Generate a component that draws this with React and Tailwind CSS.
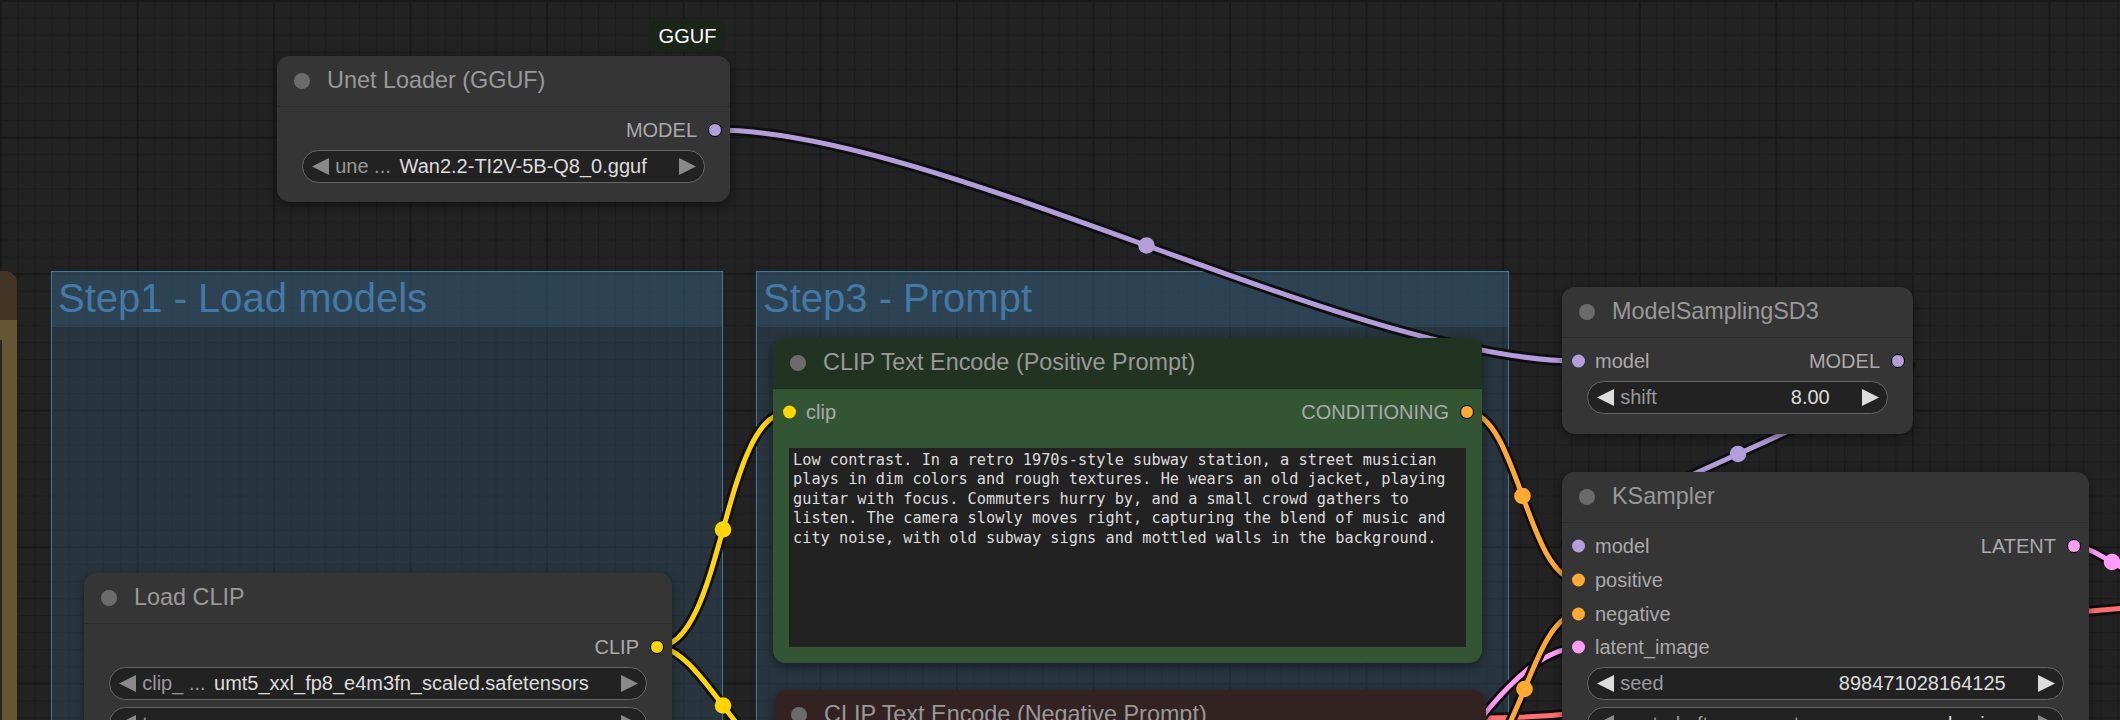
import React from "react";

function TitleDot() {
  return <span className="h-[16px] w-[16px] shrink-0 rounded-full bg-[#6b6b6b]" />;
}

function Node({ pos, title, titleCls = "bg-[#353535] border-[#2b2b2b]", bodyCls = "bg-[#353535]", children }) {
  return (
    <div className={`absolute z-20 flex flex-col overflow-hidden rounded-[13px] shadow-[0_3px_10px_rgba(0,0,0,0.45)] ${bodyCls} ${pos}`}>
      <div className={`flex h-[51px] shrink-0 items-center border-b pl-[17px] ${titleCls}`}>
        <TitleDot />
        <span className="ml-[17px] whitespace-nowrap text-[23.4px] leading-none text-[#999]">{title}</span>
      </div>
      {children}
    </div>
  );
}

function Slot({ inLabel, inDot, outLabel, outDot }) {
  return (
    <div className="relative flex h-[33.7px] shrink-0 items-center justify-between px-[33px] text-[20px] leading-none text-[#aaa]">
      {inDot && (
        <span className={`absolute left-[10px] top-1/2 h-[13px] w-[13px] -translate-y-1/2 rounded-full ${inDot}`} />
      )}
      <span>{inLabel}</span>
      <span>{outLabel}</span>
      {outDot && (
        <span className={`absolute right-[8px] top-1/2 h-[14px] w-[14px] -translate-y-1/2 rounded-full border-[1.5px] border-black ${outDot}`} />
      )}
    </div>
  );
}

function Arrow({ dir, cls }) {
  return (
    <svg width="17" height="17" viewBox="0 0 10 10" className="shrink-0">
      <polygon points={dir === "l" ? "10,0 10,10 0,5" : "0,0 0,10 10,5"} className={cls} />
    </svg>
  );
}

function Widget({ label, value, combo }) {
  const a = combo ? "fill-[#8a8a8a]" : "fill-[#dddddd]";
  return (
    <div className="mx-[25px] flex h-[33.4px] shrink-0 items-center rounded-full border-[1.5px] border-[#666] bg-[#222] px-[8.5px] text-[20px] leading-none">
      <Arrow dir="l" cls={a} />
      <span className="ml-[6.7px] whitespace-nowrap text-[#999]">{label}</span>
      <span className="ml-auto mr-[31.8px] whitespace-nowrap text-[#ddd]">{value}</span>
      <Arrow dir="r" cls={a} />
    </div>
  );
}

function Link({ d, color, mid }) {
  return (
    <g>
      <path d={d} fill="none" stroke="#0e0e0e" strokeWidth="10.5" strokeLinecap="round" />
      <path d={d} fill="none" stroke={color} strokeWidth="5" strokeLinecap="round" />
      {mid && <circle cx={mid[0]} cy={mid[1]} r="8.3" fill={color} />}
    </g>
  );
}

const PROMPT =
  "Low contrast. In a retro 1970s-style subway station, a street musician\n" +
  "plays in dim colors and rough textures. He wears an old jacket, playing\n" +
  "guitar with focus. Commuters hurry by, and a small crowd gathers to\n" +
  "listen. The camera slowly moves right, capturing the blend of music and\n" +
  "city noise, with old subway signs and mottled walls in the background.";

export default function App() {
  return (
    <div className="relative h-[720px] w-[2120px] overflow-hidden bg-[#222222] font-['Liberation_Sans',Arial,sans-serif]">
      {/* canvas grid */}
      <svg className="absolute inset-0" width="2120" height="720">
        <defs>
          <pattern id="minor" x="0.5" y="0.5" width="17.07" height="17.07" patternUnits="userSpaceOnUse">
            <rect x="0" y="0" width="17.07" height="1.2" fill="#1c1c1c" />
            <rect x="0" y="0" width="1.2" height="17.07" fill="#1c1c1c" />
          </pattern>
          <pattern id="major" x="0" y="0" width="136.56" height="136.56" patternUnits="userSpaceOnUse">
            <rect x="0" y="0" width="136.56" height="2" fill="#191919" />
            <rect x="0" y="0" width="2" height="136.56" fill="#191919" />
          </pattern>
        </defs>
        <rect width="2120" height="720" fill="url(#minor)" />
        <rect width="2120" height="720" fill="url(#major)" />
      </svg>

      {/* groups */}
      <div className="absolute left-[51px] top-[271px] z-0 h-[520px] w-[672px] border border-[#3f789e] bg-[#3b6e92]/25">
        <div className="flex h-[55px] items-center bg-[#3b6e92]/25 pb-[3px] pl-[6px] text-[40px] leading-none text-[#4479a6]">
          Step1 - Load models
        </div>
      </div>
      <div className="absolute left-[756px] top-[271px] z-0 h-[520px] w-[753px] border border-[#3f789e] bg-[#3b6e92]/25">
        <div className="flex h-[55px] items-center bg-[#3b6e92]/25 pb-[3px] pl-[6px] text-[40px] leading-none text-[#4479a6]">
          Step3 - Prompt
        </div>
      </div>

      {/* links */}
      <svg className="pointer-events-none absolute inset-0 z-10" width="2120" height="720">
        <Link d="M1480,718 C1750,718 1850,612 2200,605" color="#ff6e6e" />
        <Link d="M1300,900 C1394,900 1484,648 1578,648" color="#ff9cf9" />
        <Link d="M715,130 C938,130 1355,361 1578,361" color="#b39ddb" mid={[1146.5, 245.5]} />
        <Link d="M657,647 C724,647 722,412 789,412" color="#ffd500" mid={[723, 529.5]} />
        <Link d="M657,647 C701,647 745,764 789,764" color="#ffd500" mid={[723, 705.5]} />
        <Link d="M1467,412 C1517,412 1528,580 1578,580" color="#ffa931" mid={[1522.5, 496]} />
        <Link d="M1471,764 C1517,764 1532,614 1578,614" color="#ffa931" mid={[1524.5, 689]} />
        <Link d="M1898,361 C1990.5,361 1485.5,547 1578,547" color="#b39ddb" mid={[1738, 454]} />
        <Link d="M2074,546 C2094.6,546 2129.4,578 2150,578" color="#ff9cf9" mid={[2112, 562]} />
      </svg>

      {/* partially visible node at the left edge */}
      <div className="absolute left-[-43px] top-[271px] z-20 h-[480px] w-[60px] overflow-hidden rounded-[13px] bg-[#665533]">
        <div className="h-[49px] bg-[#443322]" />
        <div className="absolute right-[15px] top-[69px] h-[400px] w-[30px] bg-[#262626]" />
      </div>

      {/* GGUF badge */}
      <div className="absolute left-[649px] top-[19px] z-20 flex h-[33px] w-[77px] items-center justify-center rounded-[9px] bg-[#1a2419] text-[20px] leading-none text-white">
        GGUF
      </div>

      <Node pos="left-[277px] top-[56px] h-[146px] w-[453px]" title="Unet Loader (GGUF)">
        <div className="flex flex-col pt-[6.5px]">
          <Slot outLabel="MODEL" outDot="bg-[#b39ddb]" />
        </div>
        <div className="mt-[2.5px] flex flex-col gap-[7px]">
          <Widget combo label="une ..." value="Wan2.2-TI2V-5B-Q8_0.gguf" />
        </div>
      </Node>

      <Node pos="left-[84px] top-[573px] h-[300px] w-[588px]" title="Load CLIP">
        <div className="flex flex-col pt-[6.5px]">
          <Slot outLabel="CLIP" outDot="bg-[#ffd500]" />
        </div>
        <div className="mt-[2.5px] flex flex-col gap-[7px]">
          <Widget combo label="clip_ ..." value="umt5_xxl_fp8_e4m3fn_scaled.safetensors" />
          <Widget combo label="type" value="wan" />
        </div>
      </Node>

      <Node
        pos="left-[773px] top-[338px] h-[325px] w-[709px]"
        title="CLIP Text Encode (Positive Prompt)"
        titleCls="bg-[#223322] border-[#1c2a1c]"
        bodyCls="bg-[#335533]"
      >
        <div className="flex flex-col pt-[6px]">
          <Slot inLabel="clip" inDot="bg-[#ffd500]" outLabel="CONDITIONING" outDot="bg-[#ffa931]" />
        </div>
        <div className="mx-[16px] mt-[19px] h-[199px] whitespace-pre bg-[#222] pl-[4px] pt-[3.3px] font-['DejaVu_Sans_Mono',monospace] text-[15.28px] leading-[19.4px] text-[#ddd]">
          {PROMPT}
        </div>
      </Node>

      <Node
        pos="left-[774px] top-[690px] h-[200px] w-[712px]"
        title="CLIP Text Encode (Negative Prompt)"
        titleCls="bg-[#332222] border-[#2a1c1c]"
        bodyCls="bg-[#553333]"
      >
        <div className="flex flex-col pt-[6px]">
          <Slot inLabel="clip" inDot="bg-[#ffd500]" outLabel="CONDITIONING" outDot="bg-[#ffa931]" />
        </div>
      </Node>

      <Node pos="left-[1562px] top-[287px] h-[147px] w-[351px]" title="ModelSamplingSD3">
        <div className="flex flex-col pt-[6.5px]">
          <Slot inLabel="model" inDot="bg-[#b39ddb]" outLabel="MODEL" outDot="bg-[#b39ddb]" />
        </div>
        <div className="mt-[2.5px] flex flex-col gap-[7px]">
          <Widget label="shift" value="8.00" />
        </div>
      </Node>

      <Node pos="left-[1562px] top-[472px] h-[400px] w-[527px]" title="KSampler">
        <div className="flex flex-col pt-[6.5px]">
          <Slot inLabel="model" inDot="bg-[#b39ddb]" outLabel="LATENT" outDot="bg-[#ff9cf9]" />
          <Slot inLabel="positive" inDot="bg-[#ffa931]" />
          <Slot inLabel="negative" inDot="bg-[#ffa931]" />
          <Slot inLabel="latent_image" inDot="bg-[#ff9cf9]" />
        </div>
        <div className="mt-[2.5px] flex flex-col gap-[7px]">
          <Widget label="seed" value="898471028164125" />
          <Widget combo label="control after generate" value="randomize" />
        </div>
      </Node>
    </div>
  );
}
